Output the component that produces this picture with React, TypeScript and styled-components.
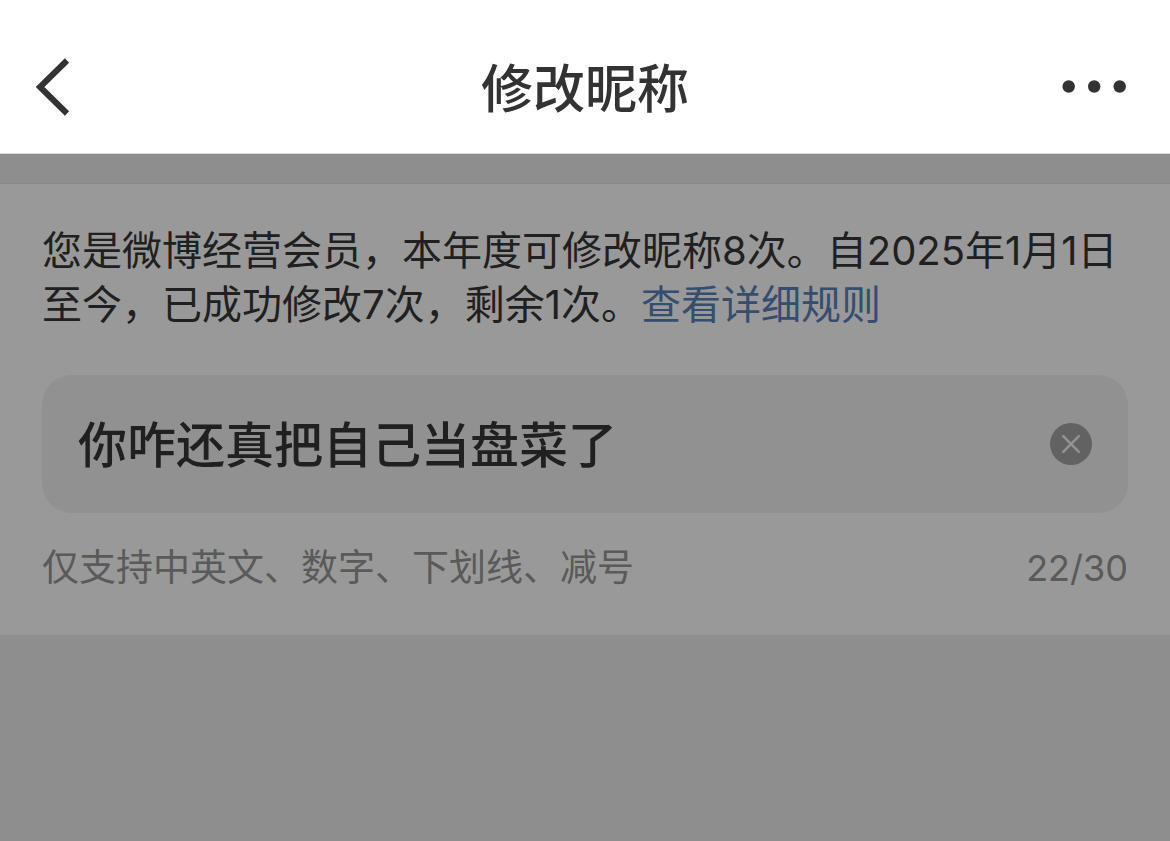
import React, { useState } from 'react';
import styled, { createGlobalStyle } from 'styled-components';

const GlobalStyle = createGlobalStyle`
  * { box-sizing: border-box; }
  html { background: #8e8e8e; }
  body {
    margin: 0;
    background: #8e8e8e;
    font-family: Inter, "Noto Sans CJK SC", sans-serif;
  }
`;

const Header = styled.header`
  display: grid;
  grid-template-columns: 1fr auto 1fr;
  align-items: center;
  padding: 48px 36px 27px;
  background: #fff;
  color: #333;
  border-bottom: 1px solid #dcdcdc;
`;

const Title = styled.h1`
  margin: 0;
  padding-top: 6px;
  font-size: 52px;
  line-height: 72px;
  font-weight: 500;
`;

const IconButton = styled.button<{ $align?: 'start' | 'end' }>`
  display: flex;
  padding: 0;
  border: 0;
  background: none;
  color: inherit;
  cursor: pointer;
  justify-self: ${({ $align }) => $align ?? 'center'};
`;

const Panel = styled.main`
  margin-top: 29px;
  padding: 40px 42px;
  background: #999;
  border-top: 1px solid #898989;
  border-bottom: 1px solid #949494;
`;

const Notice = styled.p`
  margin: 0;
  font-size: 40px;
  line-height: 54px;
  color: #202020;
`;

const RulesLink = styled.a`
  color: #344e70;
  text-decoration: none;
`;

const Field = styled.div`
  display: flex;
  align-items: center;
  margin-top: 43px;
  padding: 31px 36px;
  border-radius: 30px;
  background: #919191;
`;

const NameInput = styled.input`
  flex: 1;
  min-width: 0;
  padding: 4px 0 0;
  border: 0;
  outline: 0;
  background: none;
  color: #202020;
  font-family: inherit;
  font-size: 49px;
  font-weight: 500;
  line-height: 72px;
`;

const Hint = styled.div`
  display: flex;
  justify-content: space-between;
  margin-top: 29px;
  font-size: 37px;
  line-height: 52px;
  color: #5a5a5a;
`;

const Counter = styled.span`
  font-size: 36px;
`;

export default function App() {
  const [name, setName] = useState('你咋还真把自己当盘菜了');
  return (
    <>
      <GlobalStyle />
      <Header>
        <IconButton $align="start" aria-label="返回">
          <svg width="36" height="60" viewBox="0 0 36 60" fill="none" stroke="currentColor" strokeWidth="6">
            <path d="M31 3.5 4 30l27 26.5" />
          </svg>
        </IconButton>
        <Title>修改昵称</Title>
        <IconButton $align="end" aria-label="更多">
          <svg width="72" height="14" viewBox="0 0 72 14" fill="currentColor">
            <circle cx="6.7" cy="6.5" r="6.2" />
            <circle cx="32.2" cy="6.5" r="6.2" />
            <circle cx="57.7" cy="6.5" r="6.2" />
          </svg>
        </IconButton>
      </Header>
      <Panel>
        <Notice>
          您是微博经营会员，本年度可修改昵称8次。自2025年1月1日至今，已成功修改7次，剩余1次。
          <RulesLink href="#rules">查看详细规则</RulesLink>
        </Notice>
        <Field>
          <NameInput aria-label="昵称" value={name} onChange={(e) => setName(e.target.value)} />
          <IconButton aria-label="清除" onClick={() => setName('')}>
            <svg width="42" height="42" viewBox="0 0 42 42">
              <circle cx="21" cy="21" r="21" fill="#626262" />
              <path d="m13.2 13.2 15.6 15.6M28.8 13.2 13.2 28.8" stroke="#929292" strokeWidth="2.6" strokeLinecap="round" />
            </svg>
          </IconButton>
        </Field>
        <Hint>
          <span>仅支持中英文、数字、下划线、减号</span>
          <Counter>{name.length * 2}/30</Counter>
        </Hint>
      </Panel>
    </>
  );
}
